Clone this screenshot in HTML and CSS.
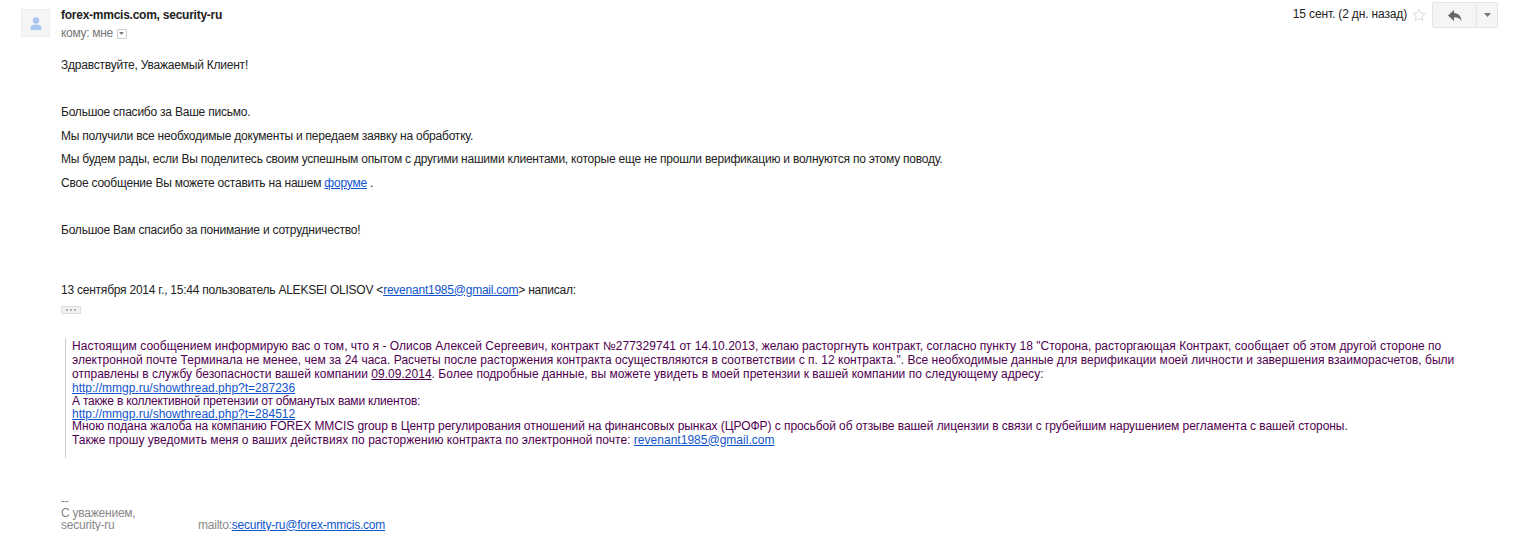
FILE: index.html
```html
<!DOCTYPE html>
<html lang="ru">
<head>
<meta charset="utf-8">
<title>Письмо</title>
<link rel="stylesheet" href="styles.css">
</head>
<body>
<div class="message">
  <div class="avatar">
    <svg width="14" height="13" viewBox="0 0 14 13"><circle cx="7" cy="3.5" r="3.2" fill="#aac6f3"/><path d="M1.5 13v-2c0-2 2.5-3.4 5.5-3.4s5.500 1.400 5.500 3.400v2z" fill="#aac6f3"/></svg>
  </div>
  <div class="content">
    <div class="header">
      <div class="sender-block">
        <div class="sender">forex-mmcis.com, security-ru</div>
        <div class="to">кому: мне <span class="to-arrow"><svg width="5" height="3" viewBox="0 0 6 4"><path d="M0 0h6L3 4z" fill="#777"/></svg></span></div>
      </div>
      <div class="actions">
        <span class="date">15 сент. (2 дн. назад)</span>
        <svg class="star" width="14" height="14" viewBox="0 0 15 15"><path d="M7.500 1l1.900 4.400 4.600.4-3.500 3.100 1.100 4.700-4.100-2.500-4.100 2.500 1.100-4.700L1 5.800l4.600-.4z" fill="none" stroke="#d8d8d8"/></svg>
        <div class="btn-group">
          <div class="btn reply"><svg width="14" height="11" viewBox="0 0 14 11"><path d="M6 0v3c4.500.3 7 3 7.500 8-1.500-2.700-3.700-3.800-7.500-3.800V11L0 5.500z" fill="#666"/></svg></div>
          <div class="btn more"><svg width="7" height="4" viewBox="0 0 7 4"><path d="M0 0h7L3.500 4z" fill="#777"/></svg></div>
        </div>
      </div>
    </div>
    <div class="body">
      <p class="greeting">Здравствуйте, Уважаемый Клиент!</p>
      <p class="first">Большое спасибо за Ваше письмо.</p>
      <p>Мы получили все необходимые документы и передаем заявку на обработку.</p>
      <p>Мы будем рады, если Вы поделитесь своим успешным опытом с другими нашими клиентами, которые еще не прошли верификацию и волнуются по этому поводу.</p>
      <p>Свое сообщение Вы можете оставить на нашем <a href="#">форуме</a> .</p>
      <p class="thanks">Большое Вам спасибо за понимание и сотрудничество!</p>
      <p class="attribution">13 сентября 2014 г., 15:44 пользователь ALEKSEI OLISOV &lt;<a href="#">revenant1985@gmail.com</a>&gt; написал:</p>
      <div class="ellipsis"><svg width="12" height="2" viewBox="0 0 12 2"><circle cx="2" cy="1" r="1" fill="#999"/><circle cx="6" cy="1" r="1" fill="#999"/><circle cx="10" cy="1" r="1" fill="#999"/></svg></div>
      <blockquote class="quote">
        <div class="para">Настоящим сообщением информирую вас о том, что я - Олисов Алексей Сергеевич, контракт №277329741 от 14.10.2013, желаю расторгнуть контракт, согласно пункту 18 "Сторона, расторгающая Контракт, сообщает об этом другой стороне по электронной почте Терминала не менее, чем за 24 часа. Расчеты после расторжения контракта осуществляются в соответствии с п. 12 контракта.". Все необходимые данные для верификации моей личности и завершения взаиморасчетов, были отправлены в службу безопасности вашей компании <u>09.09.2014</u>. Более подробные данные, вы можете увидеть в моей претензии к вашей компании по следующему адресу:</div>
        <div class="quote-line"><a href="#">http://mmgp.ru/showthread.php?t=287236</a></div>
        <div class="quote-line also">А также в коллективной претензии от обманутых вами клиентов:</div>
        <div class="quote-line second-link"><a href="#">http://mmgp.ru/showthread.php?t=284512</a></div>
        <div class="quote-line slim">Мною подана жалоба на компанию FOREX MMCIS group в Центр регулирования отношений на финансовых рынках (ЦРОФР) с просьбой об отзыве вашей лицензии в связи с грубейшим нарушением регламента с вашей стороны.</div>
        <div class="quote-line closing">Также прошу уведомить меня о ваших действиях по расторжению контракта по электронной почте: <a href="#">revenant1985@gmail.com</a></div>
      </blockquote>
      <div class="signature">
        <div>--</div>
        <div>С уважением,</div>
        <div class="sig-row"><span class="sig-name">security-ru</span><span>mailto:<a href="#">security-ru@forex-mmcis.com</a></span></div>
      </div>
    </div>
  </div>
</div>
</body>
</html>
```

FILE: styles.css
```css
html, body {
  margin: 0;
  padding: 0;
  background: #fff;
}
body {
  font-family: "Liberation Sans", Arial, sans-serif;
  font-size: 12px;
  color: #222;
  overflow: hidden;
}
.message {
  display: flex;
  align-items: flex-start;
  padding: 3px 16px 0 21px;
}
.avatar {
  box-sizing: border-box;
  width: 29px;
  height: 28px;
  margin-top: 6px;
  margin-right: 11px;
  flex: none;
  display: flex;
  align-items: center;
  justify-content: center;
  background: #f5f5f5;
  border: 1px solid #eee;
}
.content {
  flex: 1;
  min-width: 0;
}
.header {
  display: flex;
  justify-content: space-between;
  align-items: flex-start;
}
.sender {
  font-weight: bold;
  color: #222;
  line-height: 15px;
  margin-top: 5px;
  letter-spacing: -0.25px;
}
.to {
  color: #777;
  line-height: 15px;
  margin-top: 3px;
  display: flex;
  align-items: center;
  gap: 4px;
  letter-spacing: -0.3px;
}
.to-arrow {
  box-sizing: border-box;
  width: 10px;
  height: 10px;
  border: 1px solid #ccc;
  border-radius: 1px;
  display: inline-flex;
  align-items: center;
  justify-content: center;
}
.actions {
  display: flex;
  align-items: flex-start;
  margin-top: -1px;
}
.date {
  line-height: 15px;
  margin-top: 5px;
  color: #222;
  letter-spacing: -0.15px;
}
.star {
  margin: 6px 0 0 5px;
}
.btn-group {
  display: flex;
  margin-left: 6px;
  height: 26px;
}
.btn {
  box-sizing: border-box;
  background: #f5f5f5;
  border: 1px solid #e4e4e4;
  display: flex;
  align-items: center;
  justify-content: center;
  height: 26px;
}
.reply { width: 45px; border-radius: 2px 0 0 2px; }
.more { width: 21px; border-left: 0; border-radius: 0 2px 2px 0; }
.body {
  color: #222;
}
.body p {
  margin: 0;
  line-height: 15px;
  padding-top: 8.5px;
  letter-spacing: -0.22px;
}
.body p.greeting { padding-top: 0; margin-top: 17px; }
.body p.first { padding-top: 32px; }
.body p.thanks { padding-top: 32px; }
.body p.attribution { padding-top: 45px; letter-spacing: -0.23px; }
a { color: #15c; }
.ellipsis {
  box-sizing: border-box;
  width: 20px;
  height: 8px;
  margin-top: 8px;
  background: #f1f1f1;
  border: 1px solid #ddd;
  display: flex;
  align-items: center;
  justify-content: center;
}
.quote {
  margin: 24px 0 0 4px;
  padding: 1px 0 11px 6px;
  border-left: 1px solid #ccc;
  color: #500050;
  line-height: 14px;
}
.para { letter-spacing: 0.02px; }
.quote-line.also { line-height: 13px; letter-spacing: -0.22px; }
.quote-line.second-link { line-height: 12px; }
.quote-line.slim { line-height: 13px; letter-spacing: -0.055px; }
.quote-line.closing { letter-spacing: 0.02px; }
.signature {
  margin-top: 37px;
  color: #888;
  line-height: 12px;
  letter-spacing: -0.23px;
}
.sig-row { display: flex; }
.sig-name { width: 137px; }
```
